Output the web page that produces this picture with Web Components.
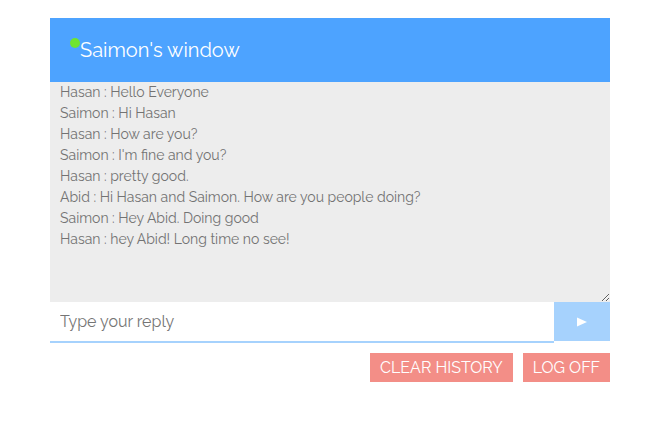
<!DOCTYPE html>
<html lang="en">
<head>
<meta charset="utf-8">
<title>Saimon's window</title>
<style>
body { margin: 0; background: #fff; font-family: Raleway, Lato, "Open Sans", sans-serif; }
</style>
</head>
<body>
<chat-window>
  <chat-header slot="header">Saimon's window</chat-header>
  <chat-log></chat-log>
  <chat-reply></chat-reply>
  <chat-actions slot="footer">
    <chat-button>CLEAR HISTORY</chat-button>
    <chat-button>LOG OFF</chat-button>
  </chat-actions>
</chat-window>
<script>
class Base extends HTMLElement {
  connectedCallback() {
    if (!this.shadowRoot) this.attachShadow({ mode: 'open' }).innerHTML = this.constructor.markup;
  }
}

customElements.define('chat-window', class extends Base {
  static markup = `<style>
    :host { display: block; padding: 18px 50px; }
    main { display: flex; flex-direction: column; }
  </style>
  <main><slot name="header"></slot><slot></slot><slot name="footer"></slot></main>`;
});

customElements.define('chat-header', class extends Base {
  static markup = `<style>
    :host { display: block; background: #4da3ff; color: #fff; padding: 17px 20px; }
    h1 { display: flex; margin: 0; font-size: 20px; line-height: 30px; font-weight: 400; }
    i { width: 10px; height: 10px; margin-top: 3px; border-radius: 50%; background: #6fe52e; }
  </style>
  <h1><i></i><span><slot></slot></span></h1>`;
});

customElements.define('chat-log', class extends Base {
  static markup = `<style>
    :host { display: block; }
    textarea { display: block; box-sizing: border-box; width: 100%; height: 220px; margin: 0; padding: 0 10px;
      border: 0; outline: 0; border-radius: 0; resize: vertical; background: #ededed; color: #737373;
      font-family: inherit; font-size: 14px; line-height: 21px; }
  </style>
  <textarea readonly aria-label="Messages">Hasan : Hello Everyone
Saimon : Hi Hasan
Hasan : How are you?
Saimon : I'm fine and you?
Hasan : pretty good.
Abid : Hi Hasan and Saimon. How are you people doing?
Saimon : Hey Abid. Doing good
Hasan : hey Abid! Long time no see!</textarea>`;
});

customElements.define('chat-reply', class extends Base {
  static markup = `<style>
    :host { display: block; }
    form { display: flex; align-items: flex-start; margin: 0; }
    input { flex: 1; min-width: 0; box-sizing: border-box; height: 41px; margin: 0; padding: 0 10px; border: 0;
      border-bottom: 2px solid #a6d2fd; border-radius: 0; outline: 0; background: #fff; color: #737373;
      font-family: inherit; font-size: 16px; }
    input::placeholder { color: #757575; opacity: 1; }
    button { display: flex; align-items: center; justify-content: center; width: 56px; height: 39px; margin: 0;
      padding: 0; border: 0; background: #a6d2fd; color: #fff; }
    svg { display: block; }
  </style>
  <form>
    <input type="text" placeholder="Type your reply" aria-label="Type your reply">
    <button type="button" aria-label="Send"><svg width="10" height="10" viewBox="0 0 10 10"><path d="M0 0.5 10 5 0 9.5Z" fill="currentColor"/></svg></button>
  </form>`;
});

customElements.define('chat-actions', class extends Base {
  static markup = `<style>
    :host { display: flex; justify-content: flex-end; gap: 10px; padding-top: 10px; }
  </style><slot></slot>`;
});

customElements.define('chat-button', class extends Base {
  static markup = `<style>
    :host { display: block; }
    button { display: block; margin: 0; padding: 0 10px; border: 0; background: #f38e87; color: #fff;
      font-family: inherit; font-size: 16px; line-height: 29px; white-space: nowrap; }
  </style><button type="button"><slot></slot></button>`;
});
</script>
</body>
</html>
